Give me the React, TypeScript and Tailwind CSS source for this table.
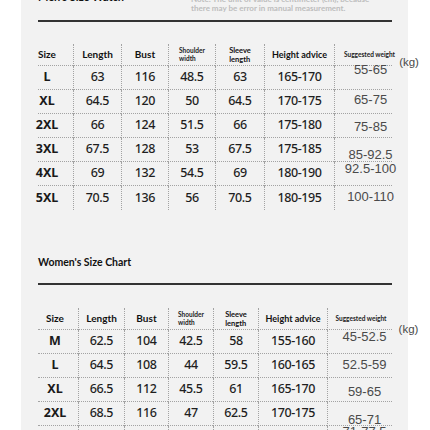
const LATO = "font-['Lato','Open_Sans',sans-serif]";
const NOTO = "font-['Noto_Sans','Open_Sans',sans-serif]";
const ARIAL = "font-['Liberation_Sans','Arial',sans-serif]";

type Row = { size: string; vals: string[]; weight: string; off: string };

const MEN: Row[] = [
  { size: 'L', vals: ['63', '116', '48.5', '63', '165-170'], weight: '55-65', off: 'top-[-8px]' },
  { size: 'XL', vals: ['64.5', '120', '50', '64.5', '170-175'], weight: '65-75', off: 'top-[-2px]' },
  { size: '2XL', vals: ['66', '124', '51.5', '66', '175-180'], weight: '75-85', off: 'top-[1px]' },
  { size: '3XL', vals: ['67.5', '128', '53', '67.5', '175-185'], weight: '85-92.5', off: 'top-[5px]' },
  { size: '4XL', vals: ['69', '132', '54.5', '69', '180-190'], weight: '92.5-100', off: 'top-[-5px]' },
  { size: '5XL', vals: ['70.5', '136', '56', '70.5', '180-195'], weight: '100-110', off: 'top-[-1px]' },
];

const WOMEN: Row[] = [
  { size: 'M', vals: ['62.5', '104', '42.5', '58', '155-160'], weight: '45-52.5', off: 'top-[-5px]' },
  { size: 'L', vals: ['64.5', '108', '44', '59.5', '160-165'], weight: '52.5-59', off: 'top-[-1px]' },
  { size: 'XL', vals: ['66.5', '112', '45.5', '61', '165-170'], weight: '59-65', off: 'top-[2px]' },
  { size: '2XL', vals: ['68.5', '116', '47', '62.5', '170-175'], weight: '65-71', off: 'top-[6px]' },
  { size: '3XL', vals: ['70.5', '120', '48.5', '64', '175-180'], weight: '71-77.5', off: 'top-[-6px]' },
];

const LINE = 'border-dotted border-[#a3a3a3]';

function SizeTable({
  rows,
  cols,
  sizePad,
  weightPad,
  weightHeadPad,
  lastLine,
}: {
  rows: Row[];
  cols: string;
  sizePad: string;
  weightPad: string;
  weightHeadPad: string;
  lastLine: boolean;
}) {
  const cell = 'flex items-center justify-center border-l ' + LINE;
  return (
    <div className={'grid ' + cols}>
      {/* header */}
      <div className={`h-[22px] flex items-center justify-center border-b ${LINE} ${sizePad} ${LATO} text-[10px] font-bold text-[#111]`}>Size</div>
      <div className={`${cell} h-[22px] border-b ${LATO} text-[10px] font-bold text-[#111]`}>Length</div>
      <div className={`${cell} h-[22px] border-b ${LATO} text-[10px] font-bold text-[#111]`}>Bust</div>
      <div className={`${cell} h-[22px] border-b ${LATO} text-[6.5px] leading-[8px] font-bold text-[#222]`}>
        <span className="text-left">Shoulder<br />width</span>
      </div>
      <div className={`${cell} h-[22px] border-b ${LATO} text-[7.5px] leading-[9px] font-bold text-[#111]`}>
        <span className="text-left">Sleeve<br />length</span>
      </div>
      <div className={`${cell} h-[22px] border-b ${LATO} text-[9px] font-bold text-[#111] whitespace-nowrap`}>Height advice</div>
      <div className={`${cell} h-[22px] border-b ${weightHeadPad} ${LATO} text-[6.5px] font-bold text-[#222] whitespace-nowrap`}>Suggested weight</div>

      {rows.map((r, i) => {
        const b = lastLine || i < rows.length - 1 ? 'border-b' : '';
        return (
          <div key={r.size} className="contents">
            <div className={`h-[24px] flex items-center justify-center ${b} ${LINE} ${sizePad} ${NOTO} text-[12.5px] font-bold text-[#1a1a1a]`}>
              {r.size}
            </div>
            {r.vals.map((v, j) => (
              <div key={j} className={`${cell} h-[24px] ${b} ${NOTO} text-[12.5px] font-medium tracking-[-0.4px] text-[#1f1f1f] whitespace-nowrap`}>
                {v}
              </div>
            ))}
            <div className={`${cell} h-[24px] ${b} ${weightPad}`}>
              <span className={`relative ${r.off} ${ARIAL} text-[13px] text-[#4a4a4a] whitespace-nowrap`}>
                {r.weight}
                {i === 0 && (
                  <span className="absolute left-[calc(100%+12px)] top-[-6px] text-[11.5px] text-[#4a4a4a]">(kg)</span>
                )}
              </span>
            </div>
          </div>
        );
      })}
    </div>
  );
}

export default function App() {
  return (
    <div className="w-[430px] h-[430px] overflow-hidden bg-white flex">
      <div className="ml-[21px] w-[387px] h-full shrink-0 bg-[#f2f2f2] pl-[17px] pr-[16px]">
        {/* men header */}
        <div className="flex h-[20px]">
          <div className={`-mt-[10px] ${LATO} text-[11px] leading-[14px] font-bold text-[#111]`}>Men's Size Watch</div>
          <div className={`ml-auto -mt-[5px] w-[201px] ${LATO} text-[8px] leading-[9px] font-bold text-[#bdbdbd] whitespace-nowrap`}>
            Note: The unit of value is centimeter (cm), because
            <br />
            there may be error in manual measurement.
          </div>
        </div>
        <div className="h-[2px] bg-[#333]" />
        <div className="mt-[22px]">
          <SizeTable
            rows={MEN}
            cols="grid-cols-[35px_48px_47px_47px_49px_70px_58px]"
            sizePad="pr-[17px]"
            weightPad="pl-[14px]"
            weightHeadPad="pl-[12px]"
            lastLine={false}
          />
        </div>

        {/* women */}
        <div className={`mt-[45px] ${LATO} text-[10.5px] leading-[14px] font-bold text-[#111]`}>Women's Size Chart</div>
        <div className="mt-[14px] h-[2px] bg-[#333]" />
        <div className="mt-[23px]">
          <SizeTable
            rows={WOMEN}
            cols="grid-cols-[40px_46px_44px_45px_45px_69px_65px]"
            sizePad="pr-[6px]"
            weightPad="pl-[9px]"
            weightHeadPad="pl-[2px]"
            lastLine={true}
          />
        </div>
      </div>
    </div>
  );
}
